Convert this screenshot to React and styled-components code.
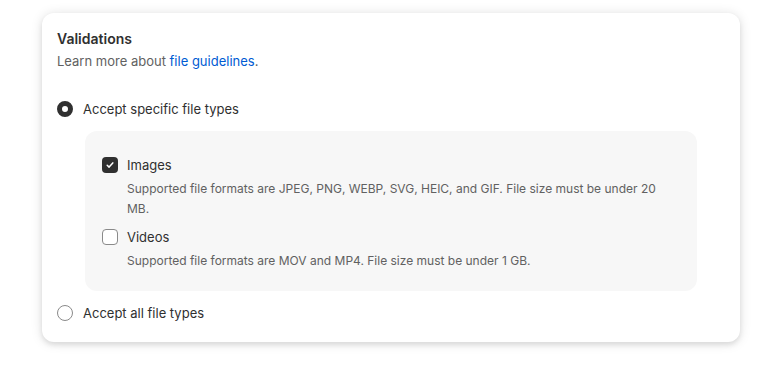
import React, { useState } from "react";
import styled, { createGlobalStyle } from "styled-components";

const GlobalStyle = createGlobalStyle`
  body {
    margin: 0;
    background: #ffffff;
    font-family: Inter, "Noto Sans", sans-serif;
    color: #303030;
    -webkit-font-smoothing: antialiased;
  }
`;

const Page = styled.div`
  width: 781px;
  height: 369px;
  padding: 13px 41px 0 42px;
  box-sizing: border-box;
`;

const Card = styled.div`
  background: #ffffff;
  border-radius: 12px;
  padding: 16px 16px 19px 15px;
  box-shadow: 0 1px 12px rgba(0, 0, 0, 0.13), 0 3px 5px rgba(0, 0, 0, 0.08);
`;

const Title = styled.h2`
  margin: 0;
  font-size: 14px;
  line-height: 20px;
  font-weight: 600;
  color: #303030;
`;

const Subtitle = styled.p`
  margin: 2px 0 0;
  font-size: 13px;
  line-height: 20px;
  color: #616161;
`;

const GuideLink = styled.a`
  color: #005bd3;
  text-decoration: none;
  cursor: pointer;
`;

const ChoiceList = styled.div`
  margin-top: 28px;
  display: flex;
  flex-direction: column;
  gap: 12px;
`;

const ChoiceRow = styled.label`
  display: flex;
  align-items: center;
  gap: 10px;
  font-size: 13px;
  line-height: 20px;
  color: #303030;
  cursor: pointer;
`;

const RadioDot = styled.span`
  width: 16px;
  height: 16px;
  box-sizing: border-box;
  border-radius: 50%;
  flex-shrink: 0;
  background: #ffffff;
  border: ${(p) => (p.$checked ? "5px solid #303030" : "1px solid #8a8a8a")};
`;

const Nested = styled.div`
  margin: 0 27px 0 28px;
  background: #f7f7f7;
  border-radius: 12px;
  padding: 24px 16px 20px 17px;
  display: flex;
  flex-direction: column;
  gap: 8px;
`;

const Option = styled.div`
  display: flex;
  flex-direction: column;
  gap: 4px;
`;

const CheckRow = styled.label`
  display: flex;
  align-items: center;
  gap: 9px;
  font-size: 13px;
  line-height: 20px;
  color: #303030;
  cursor: pointer;
`;

const Box = styled.span`
  width: 16px;
  height: 16px;
  box-sizing: border-box;
  border-radius: 4px;
  flex-shrink: 0;
  display: flex;
  align-items: center;
  justify-content: center;
  background: ${(p) => (p.$checked ? "#303030" : "#ffffff")};
  border: ${(p) => (p.$checked ? "none" : "1px solid #8a8a8a")};
`;

const Help = styled.p`
  margin: 0 0 0 25px;
  font-size: 12px;
  line-height: 20px;
  color: #616161;
`;

const Check = () => (
  <svg width="10" height="10" viewBox="0 0 10 10" fill="none">
    <path
      d="M2.2 5.2 4.1 7.1 7.8 2.9"
      stroke="#ffffff"
      strokeWidth="1.5"
      strokeLinecap="round"
      strokeLinejoin="round"
    />
  </svg>
);

const types = [
  {
    id: "images",
    label: "Images",
    help: "Supported file formats are JPEG, PNG, WEBP, SVG, HEIC, and GIF. File size must be under 20 MB.",
  },
  {
    id: "videos",
    label: "Videos",
    help: "Supported file formats are MOV and MP4. File size must be under 1 GB.",
  },
];

export default function App() {
  const [mode, setMode] = useState("specific");
  const [checked, setChecked] = useState({ images: true, videos: false });

  return (
    <>
      <GlobalStyle />
      <Page>
        <Card>
          <Title>Validations</Title>
          <Subtitle>
            Learn more about <GuideLink>file guidelines</GuideLink>.
          </Subtitle>
          <ChoiceList>
            <ChoiceRow onClick={() => setMode("specific")}>
              <RadioDot $checked={mode === "specific"} />
              Accept specific file types
            </ChoiceRow>
            {mode === "specific" && (
              <Nested>
                {types.map((t) => (
                  <Option key={t.id}>
                    <CheckRow
                      onClick={() =>
                        setChecked({ ...checked, [t.id]: !checked[t.id] })
                      }
                    >
                      <Box $checked={checked[t.id]}>
                        {checked[t.id] && <Check />}
                      </Box>
                      {t.label}
                    </CheckRow>
                    <Help>{t.help}</Help>
                  </Option>
                ))}
              </Nested>
            )}
            <ChoiceRow onClick={() => setMode("all")}>
              <RadioDot $checked={mode === "all"} />
              Accept all file types
            </ChoiceRow>
          </ChoiceList>
        </Card>
      </Page>
    </>
  );
}
